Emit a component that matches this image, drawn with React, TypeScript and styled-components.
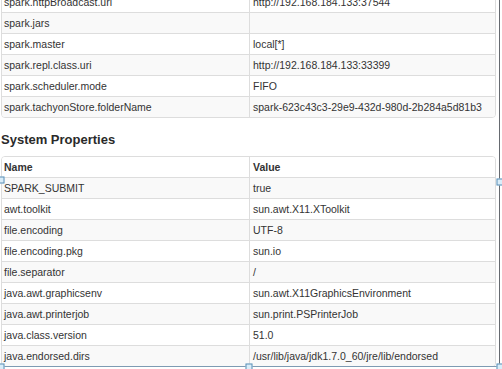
import React from "react";
import styled, { createGlobalStyle } from "styled-components";

const GlobalStyle = createGlobalStyle`
  html, body {
    margin: 0;
    padding: 0;
    background: #ffffff;
    overflow: hidden;
  }
  body {
    font-family: "Liberation Sans", Arial, Helvetica, sans-serif;
    color: #333333;
  }
`;

const Viewport = styled.div`
  position: relative;
  width: 502px;
  height: 369px;
  overflow: hidden;
  background: #ffffff;
`;

const Content = styled.div`
  margin-top: -9px;
  padding-left: 1px;
  width: 495px;
`;

const Table = styled.div`
  border: 1px solid #dddddd;
  border-radius: 4px;
  overflow: hidden;
  font-size: 10.5px;
`;

const Row = styled.div<{ $striped?: boolean; $first?: boolean }>`
  display: grid;
  grid-template-columns: 247px 1fr;
  height: 20px;
  border-top: ${(p) => (p.$first ? "none" : "1px solid #dddddd")};
  background: ${(p) => (p.$striped ? "#f9f9f9" : "#ffffff")};
`;

const Cell = styled.div<{ $head?: boolean; $right?: boolean }>`
  line-height: 20px;
  padding-left: ${(p) => (p.$right ? "3px" : "2px")};
  border-left: ${(p) => (p.$right ? "1px solid #dddddd" : "none")};
  font-weight: ${(p) => (p.$head ? 700 : 400)};
  white-space: nowrap;
  overflow: hidden;
`;

const Heading = styled.h4`
  margin: 13px 0 7px 0;
  font-size: 13px;
  line-height: 18px;
  font-weight: 700;
  color: #2a2a2a;
`;

const Frame = styled.div`
  position: absolute;
  left: 0;
  top: -20px;
  width: 499px;
  height: 386px;
  border-right: 1px solid #666a70;
  border-bottom: 1px solid #7e9bb3;
  pointer-events: none;
`;

const Handle = styled.div`
  position: absolute;
  width: 5px;
  height: 5px;
  border: 1px solid #5d8fb6;
  background: #d9edf9;
  transform: translate(-50%, -50%);
`;

const sparkRows: [string, string][] = [
  ["spark.httpBroadcast.uri", "http://192.168.184.133:37544"],
  ["spark.jars", ""],
  ["spark.master", "local[*]"],
  ["spark.repl.class.uri", "http://192.168.184.133:33399"],
  ["spark.scheduler.mode", "FIFO"],
  ["spark.tachyonStore.folderName", "spark-623c43c3-29e9-432d-980d-2b284a5d81b3"],
];

const systemRows: [string, string][] = [
  ["SPARK_SUBMIT", "true"],
  ["awt.toolkit", "sun.awt.X11.XToolkit"],
  ["file.encoding", "UTF-8"],
  ["file.encoding.pkg", "sun.io"],
  ["file.separator", "/"],
  ["java.awt.graphicsenv", "sun.awt.X11GraphicsEnvironment"],
  ["java.awt.printerjob", "sun.print.PSPrinterJob"],
  ["java.class.version", "51.0"],
  ["java.endorsed.dirs", "/usr/lib/java/jdk1.7.0_60/jre/lib/endorsed"],
];

const handles: { x: number; y: number }[] = [
  { x: 0, y: 179 },
  { x: 499, y: 181 },
  { x: 0, y: 366 },
  { x: 248, y: 366 },
  { x: 499, y: 366 },
];

export default function App() {
  return (
    <>
      <GlobalStyle />
      <Viewport>
        <Content>
          <Table>
            {sparkRows.map(([k, v], i) => (
              <Row key={k} $first={i === 0} $striped={i % 2 === 1}>
                <Cell>{k}</Cell>
                <Cell $right>{v}</Cell>
              </Row>
            ))}
          </Table>
          <Heading>System Properties</Heading>
          <Table>
            <Row $first>
              <Cell $head>Name</Cell>
              <Cell $head $right>Value</Cell>
            </Row>
            {systemRows.map(([k, v], i) => (
              <Row key={k} $striped={i % 2 === 0}>
                <Cell>{k}</Cell>
                <Cell $right>{v}</Cell>
              </Row>
            ))}
          </Table>
        </Content>
        <Frame />
        {handles.map((h, i) => (
          <Handle key={i} style={{ left: h.x + 0.5, top: h.y + 0.5 }} />
        ))}
      </Viewport>
    </>
  );
}
